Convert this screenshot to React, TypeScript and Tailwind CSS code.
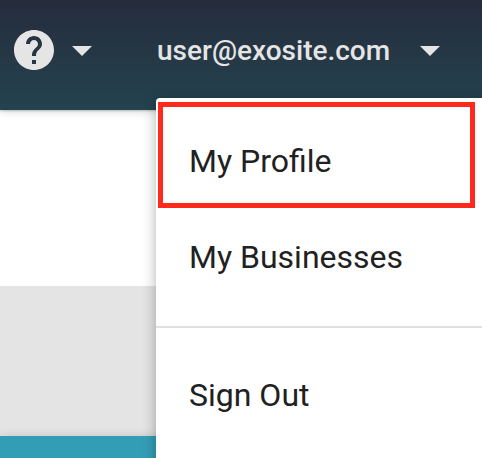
import React from 'react';
import { MdArrowDropDown, MdHelp } from 'react-icons/md';

const MenuItem = ({ label }: { label: string }) => (
    <button className="flex h-24 w-full items-center pr-8 pb-0.5 pl-[33px] text-left text-[32px] leading-none text-[#212121]">
        {label}
    </button>
);

const App = () => {
    return (
        <div className="relative flex h-[458px] w-[482px] flex-col overflow-hidden bg-white font-['Roboto',sans-serif]">
            {/* Top bar */}
            <header className="z-10 flex h-[110px] shrink-0 items-start bg-linear-to-b from-[#252c3c] to-[#23434f] pt-[26px] pl-[10px] text-[#e5e5e5] shadow-[0_0_10px_rgba(0,0,0,0.2),0_1px_2px_rgba(0,0,0,0.2)]">
                <MdHelp className="size-12" />
                <MdArrowDropDown className="size-12" />
                <div className="ml-[51px] flex h-12 w-[249px] items-center pt-0.5 text-[28px] leading-none font-medium">
                    user@exosite.com
                </div>
                <MdArrowDropDown className="size-12" />
            </header>

            {/* Page content */}
            <main className="flex grow flex-col">
                <div className="h-44" />
                <div className="h-[150px] bg-[#e4e4e4]" />
                <div className="z-0 grow bg-[#349db6] shadow-[0_0_10px_rgba(0,0,0,0.15)]" />
            </main>

            {/* Account menu */}
            <nav className="absolute top-[98px] left-[156px] z-20 h-[400px] w-[360px] rounded-t bg-white pt-4 shadow-[0_4px_14px_rgba(0,0,0,0.3)]">
                <MenuItem label="My Profile" />
                <MenuItem label="My Businesses" />
                <div className="mt-5 mb-5 h-0.5 bg-[#e0e0e0]" />
                <MenuItem label="Sign Out" />
                <div className="pointer-events-none absolute top-1 left-0.5 h-[106px] w-[317px] border-[5px] border-[#ff291c]" />
            </nav>
        </div>
    );
};

export default App;
